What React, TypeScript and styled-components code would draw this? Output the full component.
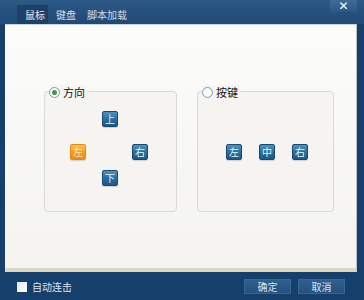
import React from "react";
import styled, { createGlobalStyle } from "styled-components";

const Global = createGlobalStyle`
  html, body { margin: 0; padding: 0; background: #173f6b; }
  * { box-sizing: border-box; }
`;

const Window = styled.div`
  width: 364px;
  height: 300px;
  display: flex;
  flex-direction: column;
  background: #173f6b;
  font-family: "Noto Sans CJK SC", "Liberation Sans", sans-serif;
  overflow: hidden;
`;

const TitleBar = styled.div`
  height: 24px;
  flex: none;
  display: flex;
  align-items: flex-end;
  padding-left: 17px;
  background: linear-gradient(#2c5986, #1f4a77);
`;

const Tab = styled.div<{ $active?: boolean }>`
  height: 19px;
  padding: 0 3px 0 8px;
  display: flex;
  align-items: center;
  font-size: 10px;
  color: ${(p) => (p.$active ? "#e4ecf5" : "#d0dcea")};
  background: ${(p) => (p.$active ? "#1c4068" : "transparent")};
`;

const CloseButton = styled.div`
  margin-left: auto;
  margin-right: 7px;
  align-self: flex-start;
  width: 27px;
  height: 12px;
  display: flex;
  align-items: center;
  justify-content: center;
  background: linear-gradient(#3d6a97, #2c5886);
  border-bottom-left-radius: 2px;
  border-bottom-right-radius: 2px;
  color: #ffffff;
  font-family: "DejaVu Sans", sans-serif;
  font-size: 12px;
  font-weight: bold;
  line-height: 1;
`;

const Body = styled.div`
  flex: none;
  height: 248px;
  padding: 0 7px 0 5px;
  display: flex;
`;

const Panel = styled.div`
  flex: 1;
  display: flex;
  gap: 20px;
  padding: 66px 0 0 39px;
  background: linear-gradient(#fcfcfb, #f4f3ef);
  border-top: 1px solid #c9d5e2;
  border-right: 1px solid #bfbfbc;
  border-bottom: 4px solid #dcd8c4;
`;

const Group = styled.fieldset<{ $w: number }>`
  width: ${(p) => p.$w}px;
  height: 121px;
  margin: 0;
  padding: 0;
  border: 1px solid #d9d9d5;
  border-radius: 4px;
  position: relative;
  background: #f5f4f0;
`;

const Legend = styled.legend`
  position: absolute;
  top: -7px;
  left: 4px;
  display: flex;
  align-items: center;
  gap: 3px;
  padding: 0 2px 0 0;
  background: #f6f5f1;
  font-size: 11px;
  line-height: 14px;
  color: #111;
`;

const Radio = styled.span<{ $checked?: boolean }>`
  width: 11px;
  height: 11px;
  border-radius: 50%;
  border: 1px solid #7f9db9;
  background: radial-gradient(circle, #ffffff 40%, #dfe6ee 100%);
  display: flex;
  align-items: center;
  justify-content: center;
  &::after {
    content: "";
    display: ${(p) => (p.$checked ? "block" : "none")};
    width: 5px;
    height: 5px;
    border-radius: 50%;
    background: #3c9a3c;
  }
`;

const Cross = styled.div`
  display: grid;
  grid-template-columns: 32px 30px 16px;
  grid-template-rows: 33px 26px 16px;
  padding: 19px 0 0 25px;
`;

const Row = styled.div`
  display: flex;
  gap: 17px;
  padding: 52px 0 0 28px;
`;

const KeyBtn = styled.div<{ $col?: number; $row?: number; $hot?: boolean }>`
  grid-column: ${(p) => p.$col ?? "auto"};
  grid-row: ${(p) => p.$row ?? "auto"};
  align-self: start;
  width: 16px;
  height: 16px;
  border-radius: 2px;
  display: flex;
  align-items: center;
  justify-content: center;
  font-size: 10px;
  line-height: 1;
  color: ${(p) => (p.$hot ? "#ffe9c4" : "#e8f2fa")};
  border: 1px solid ${(p) => (p.$hot ? "#e08a18" : "#1b4a6e")};
  background: ${(p) =>
    p.$hot
      ? "linear-gradient(#ffc24a, #f79a1c 55%, #f08a14)"
      : "linear-gradient(#4a94c2, #2a6f9f 50%, #1b5986)"};
  box-shadow: 0 1px 1px rgba(0, 0, 0, 0.15);
`;

const Footer = styled.div`
  flex: 1;
  display: flex;
  align-items: center;
  padding: 0 19px 0 17px;
  color: #dce6f1;
  font-size: 10px;
`;

const CheckBox = styled.span`
  width: 10px;
  height: 10px;
  background: linear-gradient(135deg, #dfe8f2, #ffffff);
  margin-right: 5px;
  margin-top: 2px;
`;

const FooterButtons = styled.div`
  margin-left: auto;
  display: flex;
  gap: 7px;
`;

const ActionButton = styled.div`
  width: 47px;
  height: 15px;
  display: flex;
  align-items: center;
  justify-content: center;
  background: linear-gradient(#2f5f8f, #25527f);
  border: 1px solid #3a6692;
  color: #d8e3ef;
  font-size: 10px;
`;

export default function App() {
  return (
    <>
      <Global />
      <Window>
        <TitleBar>
          <Tab $active>鼠标</Tab>
          <Tab>键盘</Tab>
          <Tab>脚本加载</Tab>
          <CloseButton>✕</CloseButton>
        </TitleBar>
        <Body>
          <Panel>
            <Group $w={133}>
              <Legend>
                <Radio $checked />
                方向
              </Legend>
              <Cross>
                <KeyBtn $col={2} $row={1}>上</KeyBtn>
                <KeyBtn $col={1} $row={2} $hot>左</KeyBtn>
                <KeyBtn $col={3} $row={2}>右</KeyBtn>
                <KeyBtn $col={2} $row={3}>下</KeyBtn>
              </Cross>
            </Group>
            <Group $w={137}>
              <Legend>
                <Radio />
                按键
              </Legend>
              <Row>
                <KeyBtn>左</KeyBtn>
                <KeyBtn>中</KeyBtn>
                <KeyBtn>右</KeyBtn>
              </Row>
            </Group>
          </Panel>
        </Body>
        <Footer>
          <CheckBox />
          自动连击
          <FooterButtons>
            <ActionButton>确定</ActionButton>
            <ActionButton>取消</ActionButton>
          </FooterButtons>
        </Footer>
      </Window>
    </>
  );
}
